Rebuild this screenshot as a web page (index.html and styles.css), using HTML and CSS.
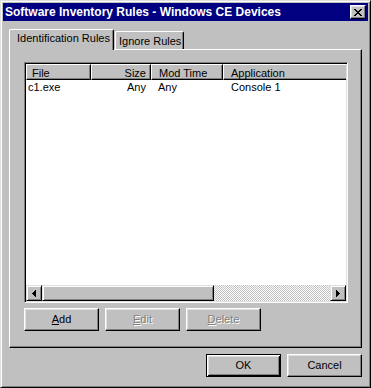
FILE: index.html
```html
<!DOCTYPE html>
<html lang="en">
  <head>
    <meta charset="UTF-8" />
    <meta name="viewport" content="width=device-width, initial-scale=1.0" />
    <title>Software Inventory Rules - Windows CE Devices</title>
    <link rel="stylesheet" href="styles.css">
  </head>
  <body>
    <div class="window">
      <div class="titlebar">
        <span class="title">Software Inventory Rules - Windows CE Devices</span>
        <button type="button" class="close">
          <svg width="8" height="7" viewBox="0 0 8 7" shape-rendering="crispEdges">
            <path d="M0 0h2v1H0z M6 0h2v1H6z M1 1h2v1H1z M5 1h2v1H5z M2 2h4v1H2z M3 3h2v1H3z M2 4h4v1H2z M1 5h2v1H1z M5 5h2v1H5z M0 6h2v1H0z M6 6h2v1H6z" fill="#000"/>
          </svg>
        </button>
      </div>

      <div class="content">
        <div class="tabstrip">
          <div class="tab active">Identification Rules</div>
          <div class="tab">Ignore Rules</div>
        </div>

        <div class="panel">
          <div class="listview">
            <div class="lv-header">
              <div class="hcell col-file">File</div>
              <div class="hcell col-size right">Size</div>
              <div class="hcell col-time">Mod Time</div>
              <div class="hcell col-app">Application</div>
            </div>
            <div class="lv-rows">
              <div class="lv-row">
                <div class="cell col-file first">c1.exe</div>
                <div class="cell col-size right">Any</div>
                <div class="cell col-time">Any</div>
                <div class="cell col-app">Console 1</div>
              </div>
            </div>
            <div class="hscroll">
              <div class="sb-btn">
                <svg width="4" height="7" viewBox="0 0 4 7" shape-rendering="crispEdges">
                  <path d="M3 0h1v7H3z M2 1h1v5H2z M1 2h1v3H1z M0 3h1v1H0z" fill="#000"/>
                </svg>
              </div>
              <div class="sb-thumb"></div>
              <div class="sb-track"></div>
              <div class="sb-btn">
                <svg width="4" height="7" viewBox="0 0 4 7" shape-rendering="crispEdges">
                  <path d="M0 0h1v7H0z M1 1h1v5H1z M2 2h1v3H2z M3 3h1v1H3z" fill="#000"/>
                </svg>
              </div>
            </div>
          </div>

          <div class="panel-buttons">
            <button type="button" class="btn"><u>A</u>dd</button>
            <button type="button" class="btn" disabled><u>E</u>dit</button>
            <button type="button" class="btn" disabled><u>D</u>elete</button>
          </div>
        </div>

        <div class="dialog-buttons">
          <button type="button" class="btn default">OK</button>
          <button type="button" class="btn">Cancel</button>
        </div>
      </div>
    </div>
  </body>
</html>
```

FILE: styles.css
```css
body {
  margin: 0;
  background-color: #c0c0c0;
  font-family: "Liberation Sans", Arial, sans-serif;
  font-size: 11px;
  color: #000;
}
.window {
  width: 371px;
  height: 388px;
  box-sizing: border-box;
  background-color: #c0c0c0;
  border: 1px solid;
  border-color: #dfdfdf #000 #000 #dfdfdf;
  box-shadow: inset 1px 1px #fff, inset -1px -1px #808080;
  padding: 2px;
  display: flex;
  flex-direction: column;
}
.titlebar {
  height: 18px;
  flex: none;
  background-color: #000080;
  color: #fff;
  display: flex;
  align-items: center;
  justify-content: space-between;
  padding: 0 2px 0 2px;
}
.title {
  font-weight: bold;
  font-size: 12px;
  line-height: 14px;
  white-space: nowrap;
}
.close {
  width: 16px;
  height: 14px;
  box-sizing: border-box;
  padding: 0;
  background-color: #c0c0c0;
  border: 1px solid;
  border-color: #fff #000 #000 #fff;
  box-shadow: inset -1px -1px #808080, inset 1px 1px #dfdfdf;
  display: flex;
  align-items: center;
  justify-content: center;
}
.content {
  flex: 1;
  padding: 8px 6px 0;
  display: flex;
  flex-direction: column;
}
.tabstrip {
  display: flex;
  align-items: flex-end;
  height: 21px;
  margin-bottom: -1px;
  position: relative;
  z-index: 1;
}
.tab {
  box-sizing: border-box;
  background-color: #c0c0c0;
  border: 1px solid;
  border-color: #fff #000 transparent #fff;
  border-bottom: none;
  border-radius: 2px 2px 0 0;
  box-shadow: inset -1px 0 #808080;
  line-height: 13px;
  white-space: nowrap;
}
.tab.active {
  width: 105px;
  height: 21px;
  padding: 2px 0 0 7px;
}
.tab:not(.active) {
  width: 69px;
  height: 18px;
  margin: 0 0 1px 1px;
  padding: 3px 0 0 3px;
}
.panel {
  height: 299px;
  box-sizing: border-box;
  border: 1px solid;
  border-color: #fff #000 #000 #fff;
  box-shadow: inset -1px -1px #808080;
  padding: 12px 0 0 14px;
}
.listview {
  width: 324px;
  height: 241px;
  box-sizing: border-box;
  background-color: #fff;
  border: 1px solid;
  border-color: #808080 #fff #fff #808080;
  box-shadow: inset 1px 1px #000, inset -1px -1px #dfdfdf;
  padding: 1px;
  display: flex;
  flex-direction: column;
  overflow: hidden;
}
.lv-header {
  display: flex;
  height: 16px;
  flex: none;
  overflow: hidden;
}
.col-file {
  width: 65px;
}
.col-size {
  width: 60px;
}
.col-time {
  width: 72px;
}
.col-app {
  width: 200px;
}
.hcell {
  flex: none;
  box-sizing: border-box;
  height: 16px;
  background-color: #c0c0c0;
  border: 1px solid;
  border-color: #fff #000 #000 #fff;
  box-shadow: inset -1px -1px #808080;
  padding: 2px 0 0 7px;
  line-height: 13px;
  white-space: nowrap;
}
.hcell.col-file {
  padding-left: 5px;
}
.hcell.right {
  text-align: right;
  padding: 2px 4px 0 0;
}
.lv-rows {
  flex: 1;
}
.lv-row {
  display: flex;
  height: 14px;
  padding-top: 1px;
  line-height: 13px;
}
.cell {
  flex: none;
  box-sizing: border-box;
  padding-left: 7px;
  white-space: nowrap;
}
.cell.first {
  padding-left: 2px;
}
.cell.right {
  text-align: right;
  padding: 0 5px 0 0;
}
.cell.col-app {
  padding-left: 8px;
}
.hscroll {
  display: flex;
  height: 16px;
  flex: none;
}
.sb-btn,
.sb-thumb {
  box-sizing: border-box;
  height: 16px;
  background-color: #c0c0c0;
  border: 1px solid;
  border-color: #dfdfdf #000 #000 #dfdfdf;
  box-shadow: inset 1px 1px #fff, inset -1px -1px #808080;
}
.sb-btn {
  width: 16px;
  display: flex;
  align-items: center;
  justify-content: center;
}
.sb-thumb {
  width: 172px;
}
.sb-track {
  flex: 1;
  background: repeating-conic-gradient(#c0c0c0 0 25%, #fff 0 50%) 0 0 / 2px 2px;
}
.panel-buttons {
  display: flex;
  gap: 6px;
  margin-top: 5px;
}
.dialog-buttons {
  display: flex;
  justify-content: flex-end;
  gap: 6px;
  margin-top: 6px;
}
.btn {
  width: 75px;
  height: 23px;
  box-sizing: border-box;
  padding: 0;
  font: inherit;
  line-height: 13px;
  color: #000;
  background-color: #c0c0c0;
  border: 1px solid;
  border-color: #fff #000 #000 #fff;
  box-shadow: inset -1px -1px #808080, inset 1px 1px #dfdfdf;
}
.btn:disabled {
  color: #808080;
  text-shadow: 1px 1px #fff;
}
.btn.default {
  border-color: #000;
  box-shadow: inset 1px 1px #fff, inset -1px -1px #000, inset 2px 2px #dfdfdf, inset -2px -2px #808080;
}
```
